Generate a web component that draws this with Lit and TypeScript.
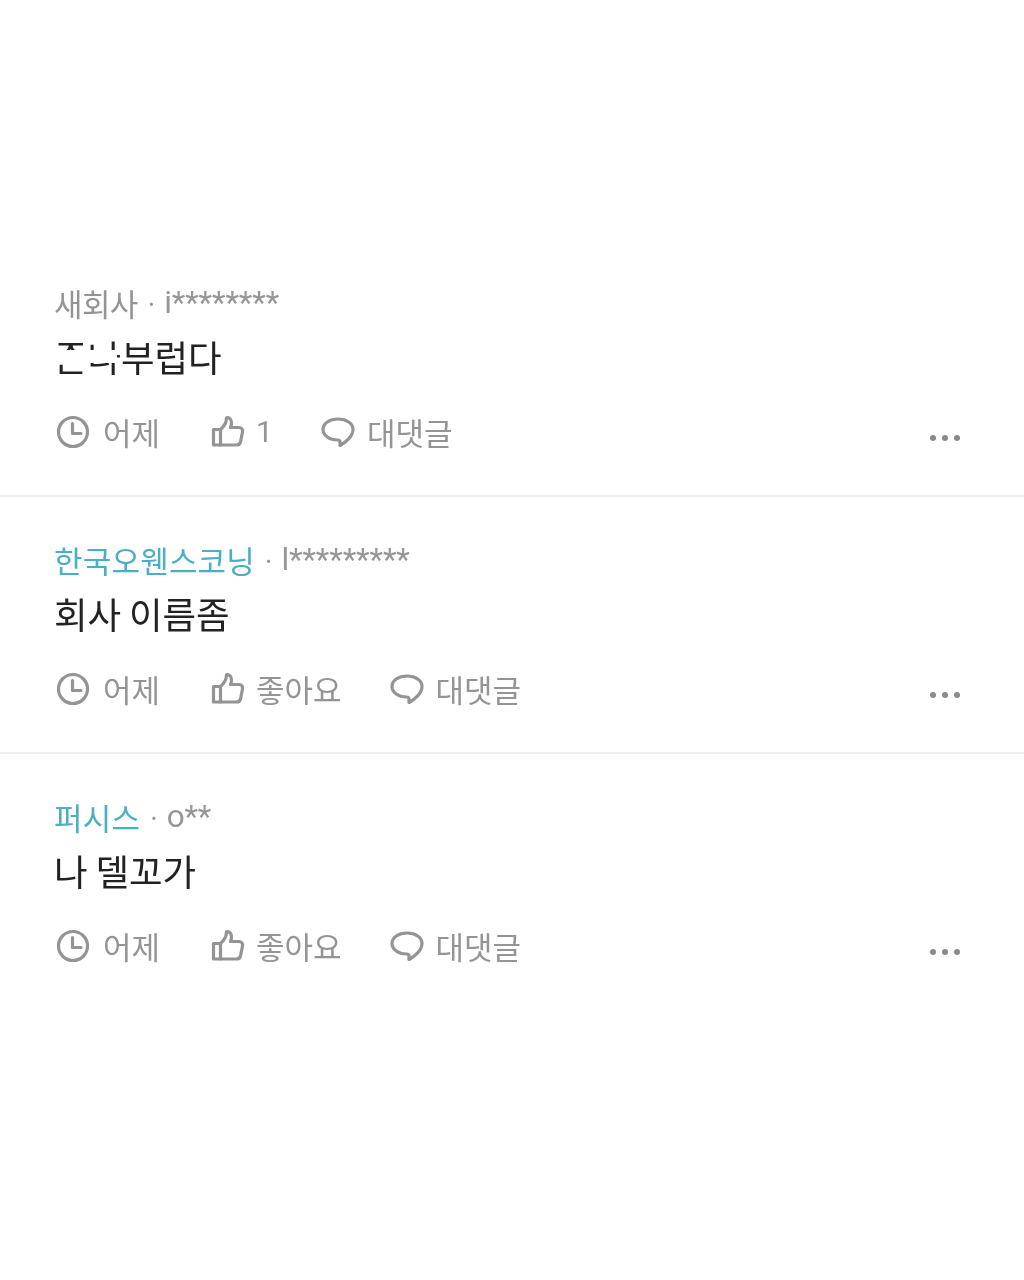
import { LitElement, html, css } from "lit";
import { customElement } from "lit/decorators.js";

const clock = html`<svg class="ic" viewBox="0 0 34 34" width="34" height="34"><g fill="none" stroke="currentColor" stroke-width="3.2"><circle cx="17" cy="17" r="14.5"/><path d="M16.5 8.5V18.5H25" stroke-linecap="round" stroke-linejoin="round"/></g></svg>`;
const thumb = html`<svg class="ic" viewBox="0 0 34 34" width="34" height="34"><g fill="none" stroke="currentColor" stroke-width="3.2" stroke-linejoin="round" stroke-linecap="round"><path d="M2.5 14.5H9.5V30H2.5Z"/><path d="M9.5 14.5C13 11.5 15.5 7.5 15.5 2.8C18.8 2.2 20.5 5 20.5 8C20.5 10 20 11.5 19.5 12.5H28C30.5 12.5 32 14.5 31.5 17L29.5 27C29 29 27.5 30 25.5 30H9.5"/></g></svg>`;
const bubble = html`<svg class="ic" viewBox="0 0 34 34" width="34" height="34"><path d="M17 4C8.5 4 2 8.5 2 14.5C2 20.5 8.5 25 16.5 25C18.5 25 19 25.5 19 27V30.5C24 28 32 21.5 32 14.5C32 8.5 25.5 4 17 4Z" fill="none" stroke="currentColor" stroke-width="3.2" stroke-linejoin="round"/></svg>`;

interface Row { co: string; user: string; text: string; like: string; link: boolean; redact?: boolean; }
const rows: Row[] = [
  { co: "새회사", user: "i********", text: "부럽다", like: "1", link: false, redact: true },
  { co: "한국오웬스코닝", user: "l*********", text: "회사 이름좀", like: "좋아요", link: true },
  { co: "퍼시스", user: "o**", text: "나 델꼬가", like: "좋아요", link: true },
];

@customElement("app-root")
export class AppRoot extends LitElement {
  static styles = css`
    :host { display: block; width: 1024px; height: 1280px; background: #fff; overflow: hidden;
      font-family: "Noto Sans CJK KR", Roboto, sans-serif; filter: blur(0.5px); }
    .list { padding-top: 239px; }
    .row { height: 258px; border-bottom: 2px solid #eeeeee; padding: 41px 64px 0 54px; box-sizing: border-box; margin-bottom: -1px; }
    .row:last-child { border-bottom: none; }
    .meta { display: flex; align-items: center; height: 46px; font-size: 31px; color: #949494; line-height: 46px; white-space: nowrap; }
    .co { letter-spacing: -0.6px; }
    .co.link { color: #4aaec6; letter-spacing: 0.2px; }
    .dot { margin: 0 6px 0 7px; font-size: 24px; }
    .user { font-family: Roboto, sans-serif; font-size: 31.5px; color: #969696; letter-spacing: -0.15px; }
    .body { position: relative; height: 52px; margin-top: 5px; font-size: 36.5px; line-height: 52px; color: #222; white-space: nowrap; letter-spacing: -0.1px; }
    .mask { position: absolute; background: #fff; left: -2px; top: 19px; width: 65px; height: 13px; }
    .actions { display: flex; align-items: center; height: 50px; margin-top: 24px; color: #949494; font-size: 31px; padding-left: 2px; }
    .ic { flex: none; color: #949494; }
    .act { display: flex; align-items: center; gap: 12px; }
    .act span { position: relative; top: -1px; }
    .time { width: 155px; gap: 13px; }
    .like { margin-right: 48px; gap: 11px; }
    .num { font-family: Roboto, sans-serif; font-size: 30px; }
    .more { margin-left: auto; display: flex; gap: 6px; padding-top: 12px; }
    .more i { width: 6px; height: 6px; border-radius: 50%; background: #8a8a8a; display: block; }
  `;
  render() {
    return html`<div class="list">${rows.map((r) => html`
      <div class="row">
        <div class="meta"><span class="co ${r.link ? "link" : ""}">${r.co}</span><span class="dot">·</span><span class="user">${r.user}</span></div>
        <div class="body">${r.redact ? html`존나${r.text}<i class="mask"></i>` : r.text}</div>
        <div class="actions">
          <span class="act time">${clock}<span>어제</span></span>
          <span class="act like">${thumb}<span class="${r.link ? "" : "num"}">${r.like}</span></span>
          <span class="act">${bubble}<span>대댓글</span></span>
          <span class="more"><i></i><i></i><i></i></span>
        </div>
      </div>`)}</div>`;
  }
}
